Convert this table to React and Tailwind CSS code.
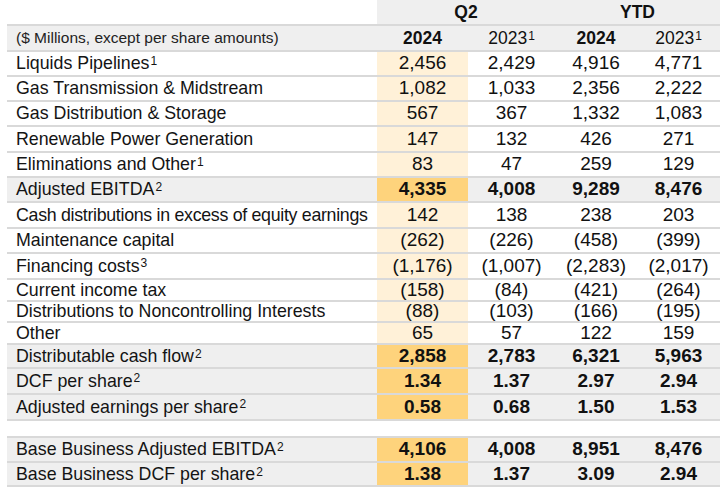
import React from "react";

const rows = [
  { label: "Liquids Pipelines", sup: "1", v: ["2,456", "2,429", "4,916", "4,771"], h: "h-[25px]" },
  { label: "Gas Transmission & Midstream", v: ["1,082", "1,033", "2,356", "2,222"], h: "h-[25px]" },
  { label: "Gas Distribution & Storage", v: ["567", "367", "1,332", "1,083"], h: "h-[25px]" },
  { label: "Renewable Power Generation", v: ["147", "132", "426", "271"], h: "h-[26px]" },
  { label: "Eliminations and Other", sup: "1", v: ["83", "47", "259", "129"], h: "h-[25px]" },
  { label: "Adjusted EBITDA", sup: "2", bold: true, v: ["4,335", "4,008", "9,289", "8,476"], h: "h-[25px]" },
  { label: "Cash distributions in excess of equity earnings", v: ["142", "138", "238", "203"], h: "h-[26px]", tight: true },
  { label: "Maintenance capital", v: ["(262)", "(226)", "(458)", "(399)"], h: "h-[25px]" },
  { label: "Financing costs", sup: "3", v: ["(1,176)", "(1,007)", "(2,283)", "(2,017)"], h: "h-[26px]" },
  { label: "Current income tax", v: ["(158)", "(84)", "(421)", "(264)"], h: "h-[22px]" },
  { label: "Distributions to Noncontrolling Interests", v: ["(88)", "(103)", "(166)", "(195)"], h: "h-[21px]" },
  { label: "Other", v: ["65", "57", "122", "159"], h: "h-[22px]" },
  { label: "Distributable cash flow", sup: "2", bold: true, v: ["2,858", "2,783", "6,321", "5,963"], h: "h-[24px]" },
  { label: "DCF per share", sup: "2", bold: true, v: ["1.34", "1.37", "2.97", "2.94"], h: "h-[26px]" },
  { label: "Adjusted earnings per share", sup: "2", bold: true, v: ["0.58", "0.68", "1.50", "1.53"], h: "h-[26px]" },
  { gap: true },
  { label: "Base Business Adjusted EBITDA", sup: "2", bold: true, v: ["4,106", "4,008", "8,951", "8,476"], h: "h-[25px]" },
  { label: "Base Business DCF per share", sup: "2", bold: true, v: ["1.38", "1.37", "3.09", "2.94"], h: "h-[24px]" },
];

const colW = ["w-[91px]", "w-[87px]", "w-[82px]", "w-[83px]"];

function Row({ row }) {
  if (row.gap) {
    return <div className="h-[17px] border-t-2 border-[#d9d9d9]" />;
  }
  const bg = row.bold ? "bg-[#efefef]" : "bg-white";
  return (
    <div className={`flex ${row.h} border-t-2 border-[#d9d9d9] ${bg}`}>
      <div
        className={`w-[370px] flex items-center pl-[9px] text-[17.8px] text-[#141414] whitespace-nowrap ${
          row.tight ? "tracking-[-0.3px]" : ""
        }`}
      >
        {row.label}
        {row.sup && (
          <span className="text-[12px] self-start mt-[0px] ml-[1px] tracking-normal">{row.sup}</span>
        )}
      </div>
      {row.v.map((val, i) => {
        let cellBg = "";
        if (i === 0) cellBg = row.bold ? "bg-[#fed37c]" : "bg-[#fff1d8]";
        return (
          <div
            key={i}
            className={`${colW[i]} ${cellBg} flex items-center justify-center text-[19px] text-[#111] ${
              row.bold ? "font-bold" : ""
            }`}
          >
            {val}
          </div>
        );
      })}
    </div>
  );
}

export default function App() {
  return (
    <div
      className="w-[720px] h-[495px] bg-white pl-[7px] overflow-hidden"
      style={{ fontFamily: '"Liberation Sans", Arial, sans-serif' }}
    >
      <div className="flex h-[24px]">
        <div className="w-[370px]" />
        <div className="w-[178px] bg-[#efefef] flex items-center justify-center text-[17.5px] font-bold text-[#111]">
          Q2
        </div>
        <div className="w-[165px] bg-[#efefef] flex items-center justify-center text-[17.5px] font-bold text-[#111]">
          YTD
        </div>
      </div>
      <div className="flex h-[26px] border-t-2 border-[#d9d9d9] bg-[#efefef]">
        <div className="w-[370px] flex items-center pl-[9px] text-[15.5px] text-[#222]">
          ($ Millions, except per share amounts)
        </div>
        <div className="w-[91px] flex items-center justify-center text-[17.5px] font-bold text-[#111]">2024</div>
        <div className="w-[87px] flex items-center justify-center text-[17.5px] text-[#111]">
          2023<span className="text-[12px] self-start mt-[1px] ml-[1px]">1</span>
        </div>
        <div className="w-[82px] flex items-center justify-center text-[17.5px] font-bold text-[#111]">2024</div>
        <div className="w-[83px] flex items-center justify-center text-[17.5px] text-[#111]">
          2023<span className="text-[12px] self-start mt-[1px] ml-[1px]">1</span>
        </div>
      </div>
      {rows.map((row, i) => (
        <Row key={i} row={row} />
      ))}
      <div className="h-[2px] bg-[#d9d9d9]" />
    </div>
  );
}
